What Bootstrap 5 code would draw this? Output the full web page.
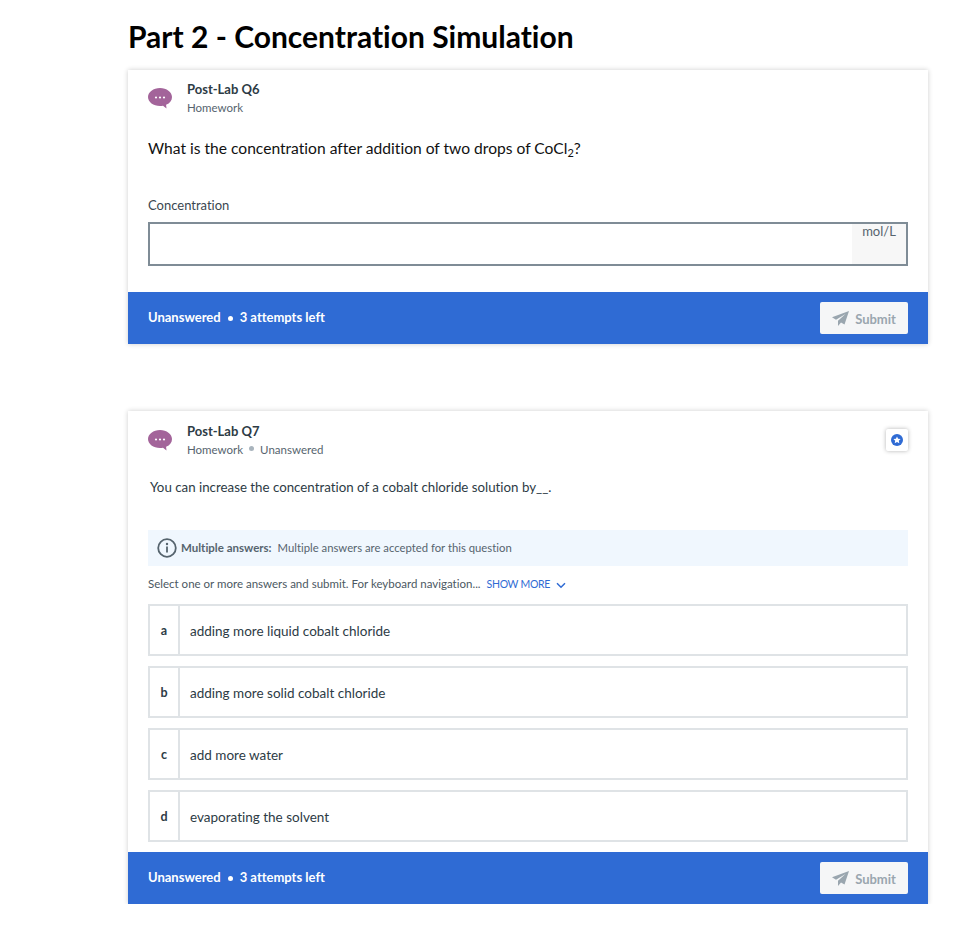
<!DOCTYPE html>
<html lang="en">
<head>
  <meta charset="UTF-8" />
  <meta name="viewport" content="width=device-width, initial-scale=1.0" />
  <title>Part 2 - Concentration Simulation</title>
  <link href="https://cdn.jsdelivr.net/npm/bootstrap@5.3.0/dist/css/bootstrap.min.css" rel="stylesheet">
  <style>
    body {
      font-family: "Lato", "Liberation Sans", sans-serif;
      font-variant-ligatures: none;
      background-color: #fff;
      color: #2d3b45;
    }

    .lab-page {
      width: 800px;
      margin-left: 128px;
    }

    .lab-title {
      font-size: 30px;
      font-weight: 700;
      line-height: 40px;
      color: #000;
      padding-top: 16px;
      margin-bottom: 14px;
    }

    .lab-card {
      border: 0;
      border-radius: 0;
      box-shadow: 0 0 5px rgba(0,0,0,.2);
    }

    .lab-card + .lab-card {
      margin-top: 67px;
    }

    .lab-head {
      padding: 10px 20px 0;
      min-height: 46px;
    }

    .lab-card + .lab-card .lab-head {
      padding-top: 11px;
    }

    .chat-icon {
      width: 24px;
      height: 22px;
      margin-top: 8px;
      margin-right: 15px;
    }

    .lab-name {
      font-size: 13px;
      font-weight: 700;
      line-height: 18px;
      color: #2d3b45;
    }

    .lab-sub {
      font-size: 11.5px;
      line-height: 20px;
      color: #56646e;
    }

    .sub-dot {
      display: inline-block;
      width: 5px;
      height: 5px;
      border-radius: 50%;
      background-color: #a9b4bd;
      margin: 0 6px;
      position: relative;
      top: -3px;
    }

    .flag-btn {
      width: 22px;
      height: 22px;
      background-color: #fff;
      border-radius: 2px;
      box-shadow: 0 0 4px rgba(0,0,0,.3);
      margin-top: 7px;
    }

    .q-six {
      font-size: 15.6px;
      line-height: 24px;
      color: #111;
      padding: 18px 20px 0;
    }

    .q-six sub {
      font-size: 11px;
    }

    .conc-label {
      font-size: 13px;
      line-height: 18px;
      padding: 36px 20px 0;
      color: #3a4750;
    }

    .conc-wrap {
      padding: 8px 20px 26px;
    }

    .conc-box {
      height: 44px;
      border: 2px solid #7f8c96;
    }

    .conc-unit {
      width: 54px;
      background-color: #f7f7f7;
      font-size: 13px;
      line-height: 14px;
      color: #56646e;
      text-align: center;
    }

    .lab-foot {
      height: 52px;
      padding: 0 20px;
      background-color: #2f6bd4;
      color: #fff;
      font-size: 13px;
      font-weight: 700;
    }

    .foot-dot {
      display: inline-block;
      width: 5px;
      height: 5px;
      border-radius: 50%;
      background-color: #fff;
      margin: 0 7px;
      position: relative;
      top: -1px;
    }

    .send-btn {
      width: 88px;
      height: 32px;
      background-color: #f5f6f7;
      color: #9aa6af;
      border: 0;
      border-radius: 2px;
      font-size: 13px;
      font-weight: 700;
      padding: 0;
      gap: 6px;
    }

    .send-btn span {
      padding-top: 3px;
    }

    .q-seven {
      font-size: 13.3px;
      line-height: 20px;
      padding: 17px 22px 0;
    }

    .multi-note {
      height: 36px;
      margin: 33px 20px 0;
      padding-left: 9px;
      background-color: #f0f7fe;
      font-size: 11.3px;
      color: #56646e;
    }

    .multi-note strong {
      margin-right: 6px;
      font-size: 11.5px;
    }

    .hint-row {
      font-size: 11.5px;
      line-height: 18px;
      padding: 9px 20px 11px;
      color: #4b5862;
    }

    .more-link {
      color: #2f6bd4;
      font-size: 10.5px;
      letter-spacing: -.3px;
      text-decoration: none;
      margin-left: 3px;
    }

    .pick-list {
      padding: 0 20px 10px;
      gap: 10px;
    }

    .pick-row {
      height: 52px;
      border: 2px solid #dfe3e6;
      font-size: 13.5px;
    }

    .pick-key {
      width: 30px;
      border-right: 2px solid #dfe3e6;
      padding-top: 2px;
      font-size: 12.5px;
      font-weight: 700;
    }

    .pick-text {
      padding: 2px 0 0 10px;
    }
  </style>
</head>
<body>
  <main class="lab-page">
    <h1 class="lab-title">Part 2 - Concentration Simulation</h1>

    <section class="card lab-card">
      <div class="lab-head d-flex">
        <svg class="chat-icon flex-shrink-0" viewBox="0 0 24 22"><path d="M12 0C5.400 0 0 4 0 9s5.400 9 12 9c1.100 0 2-.1 3-.3l3.500 2.800-.4-3.700C22 15.300 24 12.400 24 9 24 4 18.600 0 12 0z" fill="#a3649a"/><circle cx="8" cy="9.500" r="1.100" fill="#fff"/><circle cx="12" cy="9.500" r="1.100" fill="#fff"/><circle cx="16" cy="9.500" r="1.100" fill="#fff"/></svg>
        <div>
          <div class="lab-name">Post-Lab Q6</div>
          <div class="lab-sub">Homework</div>
        </div>
      </div>
      <div class="q-six">What is the concentration after addition of two drops of CoCl<sub>2</sub>?</div>
      <div class="conc-label">Concentration</div>
      <div class="conc-wrap">
        <div class="conc-box d-flex justify-content-end">
          <div class="conc-unit">mol/L</div>
        </div>
      </div>
      <div class="lab-foot d-flex align-items-center justify-content-between">
        <div>Unanswered<span class="foot-dot"></span>3 attempts left</div>
        <button class="send-btn d-flex align-items-center justify-content-center" type="button">
          <svg width="17" height="15" viewBox="0 0 17 15"><path d="M17 0 0 6.200l4 2.500L13.500 3 6 9.700V15l3-3.500 3.500 2z" fill="#9aa6af"/></svg>
          <span>Submit</span>
        </button>
      </div>
    </section>

    <section class="card lab-card">
      <div class="lab-head d-flex">
        <svg class="chat-icon flex-shrink-0" viewBox="0 0 24 22"><path d="M12 0C5.400 0 0 4 0 9s5.400 9 12 9c1.100 0 2-.1 3-.3l3.500 2.800-.4-3.700C22 15.300 24 12.400 24 9 24 4 18.600 0 12 0z" fill="#a3649a"/><circle cx="8" cy="9.500" r="1.100" fill="#fff"/><circle cx="12" cy="9.500" r="1.100" fill="#fff"/><circle cx="16" cy="9.500" r="1.100" fill="#fff"/></svg>
        <div class="flex-grow-1">
          <div class="lab-name">Post-Lab Q7</div>
          <div class="lab-sub">Homework<span class="sub-dot"></span>Unanswered</div>
        </div>
        <div class="flag-btn d-flex align-items-center justify-content-center">
          <svg width="12" height="12" viewBox="0 0 12 12"><circle cx="6" cy="6" r="6" fill="#2f6bd4"/><path d="M6 2.400 7.100 4.700l2.500.3-1.800 1.700.5 2.500L6 8l-2.300 1.200.5-2.500L2.400 5l2.500-.3z" fill="#fff"/></svg>
        </div>
      </div>
      <div class="q-seven">You can increase the concentration of a cobalt chloride solution by__.</div>
      <div class="multi-note d-flex align-items-center">
        <svg class="me-1" width="20" height="20" viewBox="0 0 20 20"><circle cx="10" cy="10" r="8.800" fill="none" stroke="#56646e" stroke-width="1.800"/><rect x="9.100" y="8.500" width="1.800" height="6" fill="#56646e"/><circle cx="10" cy="6" r="1.200" fill="#56646e"/></svg>
        <strong>Multiple answers:</strong> <span>Multiple answers are accepted for this question</span>
      </div>
      <div class="hint-row">Select one or more answers and submit. For keyboard navigation... <a class="more-link" href="#">SHOW MORE
        <svg class="ms-1" width="10" height="7" viewBox="0 0 10 7"><path d="M1 1.200 5 5.200 9 1.200" fill="none" stroke="#2f6bd4" stroke-width="1.500"/></svg></a></div>
      <div class="pick-list d-flex flex-column">
        <div class="pick-row d-flex align-items-stretch"><div class="pick-key d-flex align-items-center justify-content-center">a</div><div class="pick-text d-flex align-items-center">adding more liquid cobalt chloride</div></div>
        <div class="pick-row d-flex align-items-stretch"><div class="pick-key d-flex align-items-center justify-content-center">b</div><div class="pick-text d-flex align-items-center">adding more solid cobalt chloride</div></div>
        <div class="pick-row d-flex align-items-stretch"><div class="pick-key d-flex align-items-center justify-content-center">c</div><div class="pick-text d-flex align-items-center">add more water</div></div>
        <div class="pick-row d-flex align-items-stretch"><div class="pick-key d-flex align-items-center justify-content-center">d</div><div class="pick-text d-flex align-items-center">evaporating the solvent</div></div>
      </div>
      <div class="lab-foot d-flex align-items-center justify-content-between">
        <div>Unanswered<span class="foot-dot"></span>3 attempts left</div>
        <button class="send-btn d-flex align-items-center justify-content-center" type="button">
          <svg width="17" height="15" viewBox="0 0 17 15"><path d="M17 0 0 6.200l4 2.500L13.500 3 6 9.700V15l3-3.500 3.500 2z" fill="#9aa6af"/></svg>
          <span>Submit</span>
        </button>
      </div>
    </section>
  </main>
  <script src="https://cdn.jsdelivr.net/npm/bootstrap@5.3.0/dist/js/bootstrap.bundle.min.js"></script>
</body>
</html>
